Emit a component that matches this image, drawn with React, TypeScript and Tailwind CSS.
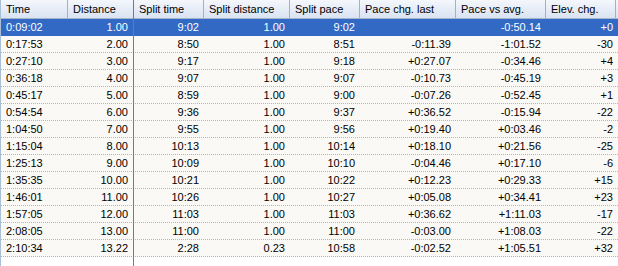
import React from "react";

type Row = [string, string, string, string, string, string, string, string];

const columns = [
    { label: "Time", width: "w-[67px]", left: true },
    { label: "Distance", width: "w-[66px]", left: false },
    { label: "Split time", width: "w-[70px]", left: false },
    { label: "Split distance", width: "w-[86px]", left: false },
    { label: "Split pace", width: "w-[70px]", left: false },
    { label: "Pace chg. last", width: "w-[96px]", left: false },
    { label: "Pace vs avg.", width: "w-[90px]", left: false },
    { label: "Elev. chg.", width: "w-[70px]", left: false },
];

const rows: Row[] = [
    ["0:09:02", "1.00", "9:02", "1.00", "9:02", "", "-0:50.14", "+0"],
    ["0:17:53", "2.00", "8:50", "1.00", "8:51", "-0:11.39", "-1:01.52", "-30"],
    ["0:27:10", "3.00", "9:17", "1.00", "9:18", "+0:27.07", "-0:34.46", "+4"],
    ["0:36:18", "4.00", "9:07", "1.00", "9:07", "-0:10.73", "-0:45.19", "+3"],
    ["0:45:17", "5.00", "8:59", "1.00", "9:00", "-0:07.26", "-0:52.45", "+1"],
    ["0:54:54", "6.00", "9:36", "1.00", "9:37", "+0:36.52", "-0:15.94", "-22"],
    ["1:04:50", "7.00", "9:55", "1.00", "9:56", "+0:19.40", "+0:03.46", "-2"],
    ["1:15:04", "8.00", "10:13", "1.00", "10:14", "+0:18.10", "+0:21.56", "-25"],
    ["1:25:13", "9.00", "10:09", "1.00", "10:10", "-0:04.46", "+0:17.10", "-6"],
    ["1:35:35", "10.00", "10:21", "1.00", "10:22", "+0:12.23", "+0:29.33", "+15"],
    ["1:46:01", "11.00", "10:26", "1.00", "10:27", "+0:05.08", "+0:34.41", "+23"],
    ["1:57:05", "12.00", "11:03", "1.00", "11:03", "+0:36.62", "+1:11.03", "-17"],
    ["2:08:05", "13.00", "11:00", "1.00", "11:00", "-0:03.00", "+1:08.03", "-22"],
    ["2:10:34", "13.22", "2:28", "0.23", "10:58", "-0:02.52", "+1:05.51", "+32"],
];

export default function SplitsGrid() {
    return (
        <div
            className="w-[618px] h-[266px] bg-white overflow-hidden relative border-l border-[#a9bfd6] text-[11px] text-black"
            style={{ fontFamily: '"Liberation Sans", Arial, sans-serif' }}
        >
            {/* header */}
            <div className="flex h-[19px] bg-gradient-to-b from-[#f4f7fc] to-[#d9e3f2] border-b border-[#a6b4c8]">
                {columns.map((col, i) => (
                    <div
                        key={i}
                        className={`${col.width} shrink-0 flex items-center pl-[5px] border-r ${i === 1 ? "border-[#7a7a7a]" : "border-[#a4b1c4]"}`}
                    >
                        {col.label}
                    </div>
                ))}
                <div className="flex-1" />
            </div>
            {/* rows */}
            {rows.map((row, r) => {
                const selected = r === 0;
                return (
                    <div
                        key={r}
                        className={`flex h-[17px] border-b border-dotted ${selected ? "bg-[#3169c5] text-white border-[#3169c5]" : "bg-[#fbf9f6] border-[#b5b5b5]"}`}
                    >
                        {row.map((cell, c) => (
                            <div
                                key={c}
                                className={`${columns[c].width} shrink-0 flex items-center ${columns[c].left ? "justify-start pl-[5px]" : "justify-end pr-[5px]"} ${c === 1 ? "border-r border-[#7a7a7a]" : ""} ${c === 7 ? "flex-1" : ""}`}
                            >
                                {cell}
                            </div>
                        ))}
                    </div>
                );
            })}
            {/* frozen column divider continues below rows */}
            <div className="absolute left-[132px] top-0 bottom-0 w-px bg-[#7a7a7a]" />
        </div>
    );
}
